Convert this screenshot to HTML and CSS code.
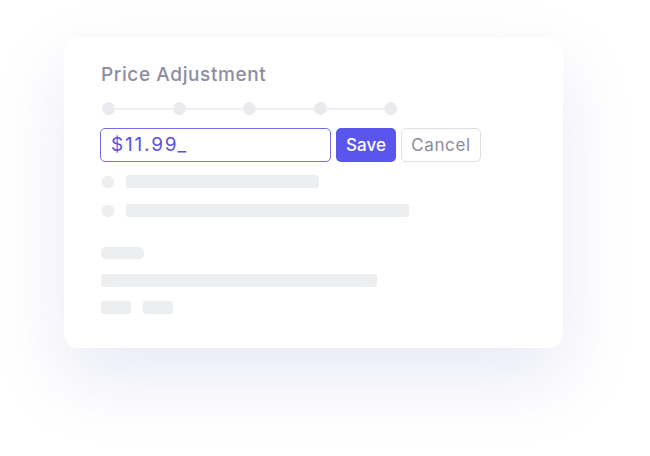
FILE: index.html
```html
<!DOCTYPE html>
<html lang="en">
  <head>
    <meta charset="UTF-8" />
    <meta name="viewport" content="width=device-width, initial-scale=1.0" />
    <title>Price Adjustment</title>
    <link rel="stylesheet" href="styles.css">
  </head>

  <body>
    <div class="card">
      <h1 class="title">Price Adjustment</h1>

      <!-- 단계 표시 -->
      <div class="steps">
        <span class="dot"></span><span class="line"></span>
        <span class="dot"></span><span class="line"></span>
        <span class="dot"></span><span class="line"></span>
        <span class="dot"></span><span class="line"></span>
        <span class="dot"></span>
      </div>

      <div class="edit">
        <div class="price">$11.99_</div>
        <button type="button" class="btn save">Save</button>
        <button type="button" class="btn cancel">Cancel</button>
      </div>

      <div class="row first">
        <span class="bullet"></span>
        <span class="bar" style="width: 193px"></span>
      </div>
      <div class="row">
        <span class="bullet"></span>
        <span class="bar" style="width: 283px"></span>
      </div>

      <span class="bar label" style="width: 43px"></span>
      <span class="bar wide" style="width: 276px"></span>
      <div class="tags">
        <span class="bar" style="width: 30px"></span>
        <span class="bar" style="width: 30px"></span>
      </div>
    </div>
  </body>
</html>
```

FILE: styles.css
```css
/* 기본 스타일 */
* {
  box-sizing: border-box;
  margin: 0;
  padding: 0;
}

body {
  background: #ffffff;
  font-family: Inter, "Open Sans", sans-serif;
  width: 650px;
  height: 456px;
  overflow: hidden;
}

/* 카드 */
.card {
  margin: 38px 0 0 64px;
  width: 499px;
  height: 310px;
  background: #ffffff;
  border-radius: 14px;
  box-shadow: 0 30px 70px rgba(110, 120, 200, 0.16);
  padding: 25px 0 0 37px;
  display: flex;
  flex-direction: column;
  align-items: flex-start;
}

.title {
  font-size: 19px;
  font-weight: 500;
  color: #8c8ca3;
  line-height: 24px;
  letter-spacing: 0.6px;
}

/* 단계 */
.steps {
  display: flex;
  align-items: center;
  width: 295px;
  margin-top: 15px;
  margin-left: 1px;
}

.dot {
  width: 13px;
  height: 13px;
  border-radius: 50%;
  background: #e9eaed;
  flex-shrink: 0;
}

.line {
  flex: 1;
  height: 2px;
  background: #eeeff1;
}

/* 가격 입력 */
.edit {
  display: flex;
  gap: 5px;
  margin-top: 13px;
  margin-left: -1px;
}

.price {
  width: 231px;
  height: 34px;
  border: 1px solid #7570dc;
  border-radius: 5px;
  padding-left: 10px;
  font-size: 19px;
  line-height: 32px;
  letter-spacing: 1.8px;
  color: #5a52df;
}

.btn {
  height: 34px;
  border-radius: 5px;
  font-family: inherit;
  font-size: 17px;
  font-weight: 500;
}

.save {
  width: 60px;
  background: #5a55ec;
  border: 0;
  color: #ffffff;
}

.cancel {
  width: 80px;
  background: #ffffff;
  border: 1px solid #e0e0e4;
  color: #8c8c9c;
  font-weight: 400;
  letter-spacing: 0.6px;
}

/* 스켈레톤 */
.row {
  display: flex;
  align-items: center;
  gap: 12px;
  margin-top: 16px;
  margin-left: 1px;
}

.row.first {
  margin-top: 13px;
}

.bullet {
  width: 12px;
  height: 12px;
  border-radius: 5px;
  background: #eceef0;
}

.bar {
  display: block;
  height: 13px;
  border-radius: 3px;
  background: #eceef0;
}

.label {
  height: 12px;
  border-radius: 5px;
  margin-top: 30px;
}

.wide {
  margin-top: 15px;
}

.tags {
  display: flex;
  gap: 12px;
  margin-top: 14px;
}
```
